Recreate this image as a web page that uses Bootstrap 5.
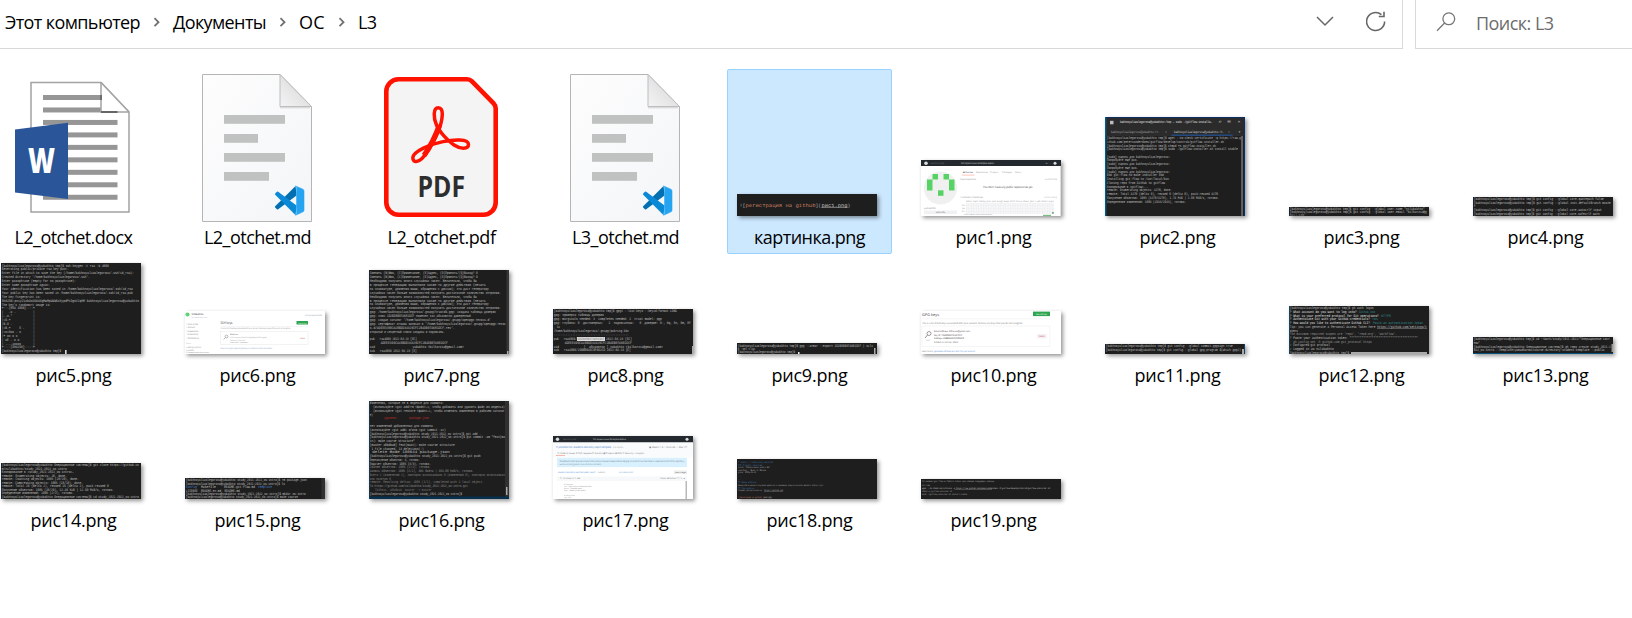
<!DOCTYPE html>
<html lang="ru">
<head>
<meta charset="utf-8">
<meta name="viewport" content="width=device-width, initial-scale=1">
<title>L3</title>
<link href="https://cdn.jsdelivr.net/npm/bootstrap@5.3.0/dist/css/bootstrap.min.css" rel="stylesheet">
<style>
body{font-family:"Open Sans","Noto Sans",sans-serif;font-size:18px;color:#000;background:#fff;height:618px;overflow:hidden}
.topbar{height:49px;gap:12px}
.address{width:1403px;border-right:1px solid #d9d9d9;border-bottom:1px solid #d9d9d9;padding:0 16px 4px 5px}
.finder{border-left:1px solid #d9d9d9;border-bottom:1px solid #d9d9d9;color:#6d6d6d;padding:0 0 2px 20px}
.crumb{display:block;white-space:nowrap;line-height:26px}
.files{display:grid;grid-template-columns:repeat(9,165px);grid-template-rows:185px 138px 145px;column-gap:19px;margin:20px 0 0 -9px}
.tile{padding-bottom:37px;border:1px solid transparent;position:relative}
.tile.chosen{background:#cce8ff;border-color:#99d1ff;border-radius:2px}
.tile svg{display:block;overflow:visible;flex:none}
.sheet{margin-left:-1px}
.shot{margin-left:9px;box-shadow:2px 2px 4px rgba(0,0,0,.42)}
.shot text{text-rendering:geometricPrecision}
.caption{position:absolute;left:-7px;right:-7px;bottom:4px;text-align:center;line-height:24px;white-space:nowrap}
.mono{font-family:"Liberation Mono",monospace;white-space:pre}
</style>
</head>
<body>
<header class="topbar d-flex">
  <nav class="address d-flex align-items-center" aria-label="Путь">
    <span class="crumb" data-w="133">Этот компьютер</span>
    <svg width="33" height="12" class="flex-shrink-0"><path d="M14.5 2.2l4 4-4 4" fill="none" stroke="#707070" stroke-width="1.8"/></svg>
    <span class="crumb" data-w="91">Документы</span>
    <svg width="33" height="12" class="flex-shrink-0"><path d="M14.5 2.2l4 4-4 4" fill="none" stroke="#707070" stroke-width="1.8"/></svg>
    <span class="crumb" data-w="24">ОС</span>
    <svg width="33" height="12" class="flex-shrink-0"><path d="M14.5 2.2l4 4-4 4" fill="none" stroke="#707070" stroke-width="1.8"/></svg>
    <span class="crumb" data-w="16.5">L3</span>
    <svg class="ms-auto" width="18" height="12" viewBox="0 0 18 12" style="margin-right:32px"><path d="M1 1l8 8 8-8" fill="none" stroke="#666" stroke-width="1.5"/></svg>
    <svg width="20" height="22" viewBox="0 0 20 22"><path d="M15.400 3.600A9 9 0 1 0 18.600 10.500M18 .700V5.500h-5.200" fill="none" stroke="#666" stroke-width="1.600"/></svg>
  </nav>
  <div class="finder d-flex align-items-center flex-grow-1">
    <svg width="20" height="20" viewBox="0 0 20 20" style="margin-bottom:2px"><circle cx="12.8" cy="6.800" r="5.900" fill="none" stroke="#777" stroke-width="1.300"/><path d="M8.600 11L1 18.700" stroke="#777" stroke-width="1.300"/></svg>
    <span class="crumb" data-w="75.500" style="margin-left:20px">Поиск: L3</span>
  </div>
</header>
<main class="files" id="files"></main>

<svg width="0" height="0" class="d-block">
  <defs>
    <linearGradient id="paper" x1="0" y1="0" x2="1" y2="1"><stop offset="0" stop-color="#fdfdfd"/><stop offset="1" stop-color="#f3f5f7"/></linearGradient>
    <linearGradient id="fold" x1="0" y1="1" x2=".7" y2=".3"><stop offset="0" stop-color="#f4f4f4"/><stop offset="1" stop-color="#dcdcdc"/></linearGradient>
  </defs>
</svg>
<script src="https://cdn.jsdelivr.net/npm/bootstrap@5.3.0/dist/js/bootstrap.bundle.min.js"></script>
<script>
const esc = s => s.replace(/&/g,'&amp;').replace(/</g,'&lt;');
// One line of thumbnail text squeezed to width w
const line = (x,y,w,s,c='#c4c4c4',fs=3.8,cls='mono') =>
  `<text class="${cls}" x="${x}" y="${y}" font-size="${fs}" fill="${c}" textLength="${Math.min(w,138-x)}" lengthAdjust="spacingAndGlyphs">${esc(s)}</text>`;
const rect = (x,y,w,h,c,e='') => `<rect x="${x}" y="${y}" width="${w}" height="${h}" fill="${c}" ${e}/>`;
const shot = (h,body,bg='#1e1e1e') => `<svg class="shot" width="140" height="${h}" viewBox="0 0 140 ${h}" style="overflow:hidden">${rect(0,0,140,h,bg)}${body}</svg>`;
// Console: rows are [text, width, colour, x], spaced by the pitch
const term = (h,y0,p,rows,extra='') => shot(h, rows.map((r,i)=> r ? line(r[3]??.8, (y0+1.2+i*p).toFixed(1), r[1], r[0], r[2]) : '').join('')+extra);
const P='[bakhnoyuliaslegorova@yubakhto tmp]$ ';

const word = `<svg class="sheet" width="165" height="147" viewBox="-9 69 165 147">
<path d="M31 82.5h70l28 29.5v100H31z" fill="#fff" stroke="#a3a3a3" stroke-width="1.5"/>
${[0,1,2,3,4,5,6,7,8].map(i=>rect(43,95+i*12.47,i?74.5:58,5,'#969696')).join('')}
<path d="M101 83v29h28z" fill="#fff"/><path d="M101 82.5v29.5h28" fill="none" stroke="#a3a3a3" stroke-width="1.5"/><path d="M101 95v5M101 112h16.5" stroke="#666" stroke-width="1.8"/><path d="M101 82.5l28 29.5" stroke="#a3a3a3" stroke-width="1.5"/>
<path d="M15 129.5l53-6.8V199l-53-6.5z" fill="#2a5699"/>
<text x="28" y="173.4" font-family="Open Sans" font-weight="800" font-size="34.5" fill="#fff" textLength="27" lengthAdjust="spacingAndGlyphs">W</text></svg>`;
const md = `<svg class="sheet" width="165" height="147" viewBox="175 69 165 147">
<path d="M202.5 74.5h77.5l31.5 32V221.500h-109z" fill="url(#paper)" stroke="#b5b5b5"/>
<path d="M280 107.800h30" stroke="#cfcfcf"/><path d="M280 74.500v32h31.500z" fill="url(#fold)" stroke="#bdbdbd"/>
${[[115,61],[134,34],[153,61],[172,45]].map(a=>rect(224,a[0],a[1],8.8,'#c0c2c1')).join('')}
<path d="M295.600 186l.9 9.400-18.300 13.900q-.7.500-1.300 0l-1.700-1.700q-.6-.7 0-1.400z" fill="#0070b3"/>
<path d="M295.600 215.200l.9-9.600-18.300-13.800q-.7-.5-1.300 0l-1.700 1.600q-.6.700 0 1.400z" fill="#0a8ad6"/>
<path d="M295.600 186l6.900 3.100q1.500.6 1.500 1.900v19.200q0 1.300-1.500 1.900l-6.900 3.100q1-.3 1-1.700v-25.800q0-1.400-1-1.700z" fill="#26a4f2" stroke="#26a4f2" stroke-width=".6"/></svg>`;
const pdf = `<svg class="sheet" width="165" height="147" viewBox="359 69 165 147">
<path d="M398.500 79.300h68.500q3 0 5 2l21.600 22q2.100 2.200 2.100 5.200v94.100a12.200 12.200 0 0 1-12.200 12.200h-85a12.200 12.200 0 0 1-12.200-12.200V91.500a12.200 12.200 0 0 1 12.200-12.200z" fill="#f4f4f4" stroke="#ff1200" stroke-width="4.600"/>
<path d="M438.200 107.700C433 107.700 433.400 118 436.500 125 439.500 132 448 141 454 145 460 149 468.500 149.500 468.500 144.500 468.500 138.500 453 139.700 443 141.600 431 144 413 151 412.800 157.800 412.800 163.500 419.500 162.500 425 155 433 143.500 441.800 127 442.300 114.500 442.400 110 441 107.700 438.200 107.700z" fill="none" stroke="#ff1200" stroke-width="3.500" stroke-linejoin="round"/>
<path d="M424 155.500Q433 143 439.500 125" fill="none" stroke="#ff1200" stroke-width="5.200"/>
<text x="417.500" y="196.800" font-family="Open Sans" font-weight="700" font-size="29" fill="#2d2d2d" textLength="47.500" lengthAdjust="spacingAndGlyphs">PDF</text></svg>`;

const sans='fw-normal';
const s1 = shot(56,
  rect(0,0,140,6,'#24292f')+`<circle cx="5" cy="3.200" r="1.800" fill="#ddd"/><circle cx="134" cy="3.200" r="1.500" fill="#ddd"/>`+
  line(10,4.300,13,'Search or jump','#777',2.600,sans)+line(40,4.300,33,'Pull requests Issues Marketplace Explore','#ddd',2.600,sans)+line(124,4.300,6,'+ ·','#aaa',2.600,sans)+
  `<circle cx="19.500" cy="28" r="16.600" fill="#f0f0f0"/>`+
  rect(11.5,14,5.500,5.500,'#56d364')+rect(22.5,14,5.500,5.500,'#56d364')+rect(6,19.500,5.500,11,'#56d364')+rect(28,19.500,5.500,11,'#56d364')+rect(17,30.300,5.500,5.500,'#56d364')+
  line(42,13.300,10,'▣ Overview','#444',2.500,sans)+rect(41,14.800,12.500,.5,'#fd8c73')+line(55,13.300,12,'Repositories','#999',2.500,sans)+line(69,13.300,8,'Projects','#999',2.500,sans)+line(81,13.300,10,'Packages','#999',2.500,sans)+line(94,13.300,6,'Stars','#999',2.500,sans)+
  line(39,20,16,'Popular repositories','#888',2.400,sans)+line(124,20,12,'Customize','#aaa',2.300,sans)+
  line(62,28,50,"You don't have any public repositories yet.",'#444',3,sans)+
  line(39,38,23,'1 contribution in the last year','#888',2.400,sans)+line(123,38,13,'Contribution settings','#aaa',2.200,sans)+
  line(45,42.200,88,'Mar   Apr   May   Jun   Jul   Aug   Sep   Oct   Nov   Dec   Jan   Feb   Mar   Apr','#999',2.200,sans)+
  rect(45,43.200,88,10.500,'#ecedef')+Array.from({length:52},(_,i)=>rect(46.200+i*1.690,43.200,.35,10.500,'#fff')).join('')+[1,2,3,4,5,6].map(i=>rect(45,43.200+i*1.500,88,.3,'#fff')).join('')+
  line(41,46.200,3,'Mon','#999',2,sans)+line(41,49.300,3,'Wed','#999',2,sans)+line(41,52.400,3,'Fri','#999',2,sans)+rect(131,52,1.800,1.800,'#7aa884')+
  line(3,48.500,12,'yubakhto','#888',2.300,sans)+rect(3,50.500,33,3.500,'#f0f1f2')+line(15,53.200,9,'Edit profile','#555',2.200,sans)+line(43,55.400,28,'Learn how we count contributions','#999',1.800,sans)+rect(122,54.800,8,1.200,'#79bd87')+rect(139,6,1,50,'#ddd'),'#fff');
const s0 = shot(22,line(2.500,12.500,6,'![','#bbb',5)+line(8.500,12.500,70,'регистрация на github','#c98063',5)+line(78.500,12.500,5.500,'](','#bbb',5)+line(84.500,12.500,26,'рис1.png','#c5c5c5',5)+line(110.500,12.500,2.800,')','#bbb',5)+rect(84.500,13.100,26,.6,'#aaa'));
const r2=[[P+'wget --no-check-certificate -q https://raw.g',134],['ithub.com/petervanderdoes/gitflow/develop/contrib/gitflow-installer.sh',117],[P+'chmod +x gitflow-installer.sh',109],[P+'sudo ./gitflow-installer.sh install stable',131],null,['[sudo] пароль для bakhnoyuliaslegorova:',63],['Попробуйте ещё раз.',31],['[sudo] пароль для bakhnoyuliaslegorova:',63],['Попробуйте ещё раз.',31],['[sudo] пароль для bakhnoyuliaslegorova:',63],['### git-flow no-make installer ###',57],['Installing git-flow to /usr/local/bin',62],['Cloning repo from GitHub to gitflow',58],['Клонирование в «gitflow»...',41],['remote: Enumerating objects: 4270, done.',65],['remote: Total 4270 (delta 0), reused 0 (delta 0), pack-reused 4270',111],['Получение объектов: 100% (4270/4270), 1.74 MiB | 2.98 MiB/s, готово.',112],['Определение изменений: 100% (2533/2533), готово.',79]].map(r=>r&&[r[0],r[1],'#c4c4c4',2]);
const s2 = term(99,20.800,3.740,r2,rect(0,0,140,19,'#2b2b2b')+rect(0,0,140,.8,'#08326e')+rect(0,0,1.400,99,'#075a85')+rect(138.800,0,1.200,99,'#0a2f6d')+rect(66.500,17.500,61,1.500,'#234a80')+rect(136.300,19,1.500,80,'#777')+
  rect(5,3.800,3.500,3.500,'#bbb')+line(15,6.300,92,'bakhnoyuliaslegorova@yubakhto:/tmp — sudo ./gitflow-installe…','#eee',3.600)+line(113,6.300,4,'⌕','#ccc',4)+line(122,6.300,4,'≡','#ccc',4)+line(132.500,6.300,3,'×','#ddd',4)+
  line(6,15.500,50,'bakhnoyuliaslegorova@yubakhto:/t… ','#aaa',3.300)+line(60,15.500,2,'×','#aaa',3.300)+line(69,15.500,50,'bakhnoyuliaslegorova@yubakhto:/t…','#ddd',3.300)+line(123,15.500,2,'×','#aaa',3.300)+line(133,15.500,3,'▾','#ccc',3.300));
const s3 = term(9,1.700,3,[[P+'git config --global user.name "nilibakhto"',135],[P+'git config --global user.email "bilharzia@g',137],['mail.com"',16,'#888']]);
const s4 = term(19,2,3.600,[[P+'git config --global core.quotepath false',130],[P+'git config --global init.defaultBranch maste',137],['r',2],[P+'git config --global core.autocrlf input',128],[P+'git config --global core.safecrlf warn',126]]);
const s5 = term(91,2.300,3.900,[[P+'ssh-keygen -t rsa -b 4096',107],['Generating public/private rsa key pair.',67],['Enter file in which to save the key (/home/bakhnoyuliaslegorova/.ssh/id_rsa):',132],["Created directory '/home/bakhnoyuliaslegorova/.ssh'.",88],['Enter passphrase (empty for no passphrase):',74],['Enter same passphrase again:',48],['Your identification has been saved in /home/bakhnoyuliaslegorova/.ssh/id_rsa',131],['Your public key has been saved in /home/bakhnoyuliaslegorova/.ssh/id_rsa.pub',131],['The key fingerprint is:',39],['SHA256:pniyZizbUskOUAXgMwMpUWWKzXypdPtDgsVJqHM bakhnoyuliaslegorova@yubakhto',138],["The key's randomart image is:",49],['+---[RSA 4096]----+',33],['|   .o .          |',33],['|..o.*            |',33],['|=O.+             |',33],['|B.O .            |',33],['|=B.+     S .     |',33],['|=o=Ooo . o       |',33],['|+ oo o o         |',33],['| oE . o o        |',33],['| ....ioooo       |',33],['+----[SHA256]-----+',33],[P,61]],rect(64,87,1.600,4,'#ddd'));
const s6 = shot(43,
 `<circle cx="2.500" cy="3.500" r="2.100" fill="#5fd37a"/>`+line(6.500,4,12,'NiliBakhto','#333',2.600,sans)+line(6.500,6.900,16,'Your personal account','#aaa',2,sans)+line(120,5,17,'Go to your personal profile','#789',2.200,sans)+
 ['Public profile','Account','Appearance','Accessibility','Notifications'].map((t,i)=>line(1,13.500+i*3.600,[12,9,12,12,13][i],'○ '+t,'#888',2.400,sans)).join('')+
 line(1,33.200,5,'Access','#aaa',2,sans)+line(1,36.500,15,'▭ Billing and plans','#888',2.200,sans)+line(1,39.700,8,'✉ Emails','#888',2.200,sans)+line(1,42.400,23,'⊙ Password and authentication','#777',1.900,sans)+
 line(35.500,13.200,12,'SSH keys','#333',3.500,sans)+rect(35.500,15.200,87,.3,'#ddd')+rect(111.500,10,11.500,3.500,'#2da44e')+line(113,12.500,8.500,'New SSH key','#fff',1.900,sans)+
 line(35.500,18.300,70,'This is a list of SSH keys associated with your account. Remove any keys that you do not recognize.','#888',2.200,sans)+
 `<rect x="35.500" y="20.700" width="87.500" height="13" fill="#fff" stroke="#e2e2e2" stroke-width=".4"/><circle cx="41.500" cy="25.500" r="1.400" fill="none" stroke="#888" stroke-width=".6"/><path d="M40.500 26.500l-1.800 2" stroke="#888" stroke-width=".6"/>`+
 line(45,24.300,8,'Bakhto','#555',2,sans)+line(45,26.900,37,'SHA256:pniyZizbUskOUAXgMwMpUWWKzXypdPt','#999',1.900,sans)+line(45,29.500,15,'Added on 22 Apr 2022','#999',1.900,sans)+line(45,32,18,'Never used — Read/write','#777',1.900,sans)+line(115,27.800,5,'Delete','#d46a76',2.200,sans)+
 line(35.500,37.500,52,'Check out our guide to generating SSH keys or troubleshoot common SSH problems.','#7b9bc4',2.200,sans),'#fff');
const s7 = term(84,3.200,3.870,[['Сменить (N)Имя, (C)Примечание, (E)Адрес, (O)Принять/(Q)Выход? O',108],['Сменить (N)Имя, (C)Примечание, (E)Адрес, (O)Принять/(Q)Выход? O',108],['Необходимо получить много случайных чисел. Желательно, чтобы Вы',107],['в процессе генерации выполняли какие-то другие действия (печать',116],['на клавиатуре, движения мыши, обращения к дискам); это даст генератору',119],['случайных чисел больше возможностей получить достаточное количество энтропии.',131],['Необходимо получить много случайных чисел. Желательно, чтобы Вы',107],['в процессе генерации выполняли какие-то другие действия (печать',116],['на клавиатуре, движения мыши, обращения к дискам); это даст генератору',119],['случайных чисел больше возможностей получить достаточное количество энтропии.',131],['gpg: /home/bakhnoyuliaslegorova/.gnupg/trustdb.gpg: создана таблица доверия',126],['gpg: ключ 1D2BD8B07A681DCF помечен как абсолютно доверенный',101],["gpg: создан каталог '/home/bakhnoyuliaslegorova/.gnupg/openpgp-revocs.d'",121],["gpg: сертификат отзыва записан в '/home/bakhnoyuliaslegorova/.gnupg/openpgp-revoc",136],["s.d/ADEEE390CA48BDD34326CFC2B4DB07A681DCF.rev'.",85],['открытый и секретный ключи созданы и подписаны.',75],null,['pub   rsa4096 2022-04-23 [SC]',47],['      ADEEE390CA48BDD34326CFC2B4DB07A681DCF',78],['uid                      yubakhto <bilharzia@gmail.com>',94],['sub   rsa4096 2022-04-23 [E]',47]],rect(137.500,0,2.500,84,'#363636')+rect(138,81,1.500,3,'#aaa'));
const s8 = term(45,2.200,3.900,[[P+'gpg2 --list-keys --keyid-format LONG',123],['gpg: проверка таблицы доверия',50],['gpg: marginals needed: 3  completes needed: 1  trust model: pgp',108],['gpg: глубина: 0  достоверных:   1  подписанных:   0  доверие: 0-, 0q, 0n, 0m, 0f',137],[', 1u',6],['/home/bakhnoyuliaslegorova/.gnupg/pubring.kbx',75],['---------------------------------------------',75],['pub   rsa4096/',23],['      ADEEE390CA48BDD34326CFC2B4DB07A681DCF',78],['uid              [  абсолютно ] yubakhto <bilharzia@gmail.com>',109],['sub   rsa4096/25BB86A5C9F0D2CD 2022-04-23 [E]',77]],rect(24,28,28,4,'#ddd')+line(24.500,31,27,'1D2BD8B07A681DCF','#777',3.500)+line(53,30.700,26,'2022-04-23 [SC]')+rect(139,37,1,8,'#aaa'));
const s9 = term(11,2.600,3.100,[[P+'gpg --armor --export 1D2BD8B07A681DCF | xcli',135],['p -sel clip',17],[P,59]],rect(61,9,1.500,2,'#eee')+rect(137,5,1.500,6,'#aaa'));
const s10 = shot(43,line(1,4.800,17,'GPG keys','#333',3.700,sans)+rect(112,.6,17,4.500,'#2da44e')+line(115,3.700,11,'New GPG key','#fff',2.200,sans)+rect(1,7.800,128,.3,'#ddd')+
 line(1,13,101,'This is a list of GPG keys associated with your account. Remove any keys that you do not recognize.','#777',2.600,sans)+
 `<rect x="1" y="15" width="128" height="20.500" fill="#fff" stroke="#e5e5e5" stroke-width=".4"/><circle cx="8" cy="22.500" r="2" fill="none" stroke="#777" stroke-width=".7"/><path d="M6.500 24L4 27" stroke="#777" stroke-width=".8"/>`+line(5,30,4,'GPG','#aaa',2,sans)+
 line(13,20.800,36,'Email address: bilharzia@gmail.com','#444',2.500,sans)+line(13,24.500,28,'Key ID: 1D2BD8B07A681DCF','#555',2.500,sans)+line(13,28.200,30,'Subkeys: 25BB86A5C9F0D2CD','#444',2.500,sans)+line(13,32,24,'Added on 23 Apr 2022','#777',2.500,sans)+rect(116,23,9.500,4.500,'#f5f0f1')+line(118,26,5.500,'Delete','#d0606c',2.300,sans)+
 line(1,41.300,11,'Learn how to','#777',2.400,sans)+line(13,41.300,41,'generate a GPG key and add it to your account','#5c91d6',2.400,sans),'#fff');
const s11 = term(10,2,3.500,[[P+'git config --global commit.gpgsign true',127],[P+'git config --global gpg.program $(which gpg2)',135]],rect(137,5,2,5,'#aaa')+rect(139.300,0,.7,10,'#154d88'));
const s12 = term(48,2.100,3.700,[[P+'gh auth login',84],['? What account do you want to log into?',67,'#eee'],['? What is your preferred protocol for Git operations?',89,'#eee'],['? Authenticate Git with your GitHub credentials?',80,'#eee'],['? How would you like to authenticate GitHub CLI?',80,'#eee'],['Tip: you can generate a Personal Access Token here https://github.com/settings/t',137],['okens',8],["The minimum required scopes are 'repo', 'read:org', 'workflow'.",107,'#999'],['? Paste your authentication token: ****************************************',128,'#ccc'],['- gh config set -h github.com git_protocol https',82,'#999'],['✓ Configured git protocol',40],['✓ Logged in as nilibakhto',44,'#ccc'],[P,61]],line(70,7,16,'GitHub.com','#2a9090',3.600)+line(92,10.700,10,'HTTPS','#2a9090',3.600)+line(83,14.400,6,'Yes','#2a9090',3.600)+line(84,18.100,50,'Paste an authentication token','#2a9090',3.600)+rect(88,22.600,50,.4,'#aaa')+rect(62,46,76,2,'#aaa')+rect(0,0,.7,48,'#165274'));
const s13 = term(17,2,3.750,[[P+'cd ~/work/study/2021-2022/"Операционные сист',136],['емы"',6],['[bakhnoyuliaslegorova@yubakhto Операционные системы]$ gh repo create study_2021-2',137],['022_os-intro --template=yamadharma/course-directory-student-template --public',131]],rect(0,16,140,1,'#07527c')+rect(138.500,7,1.500,8,'#999'));
const s14 = term(36,2,3.520,[['[bakhnoyuliaslegorova@yubakhto Операционные системы]$ git clone https://github.co',137],['m/nilibakhto/study_2021-2022_os-intro',65],['Клонирование в «study_2021-2022_os-intro»…',72],['remote: Enumerating objects: 20, done.',65],['remote: Counting objects: 100% (20/20), done.',77],['remote: Compressing objects: 100% (18/18), done.',81],['remote: Total 20 (delta 2), reused 15 (delta 2), pack-reused 0',107],['Получение объектов: 100% (20/20), 12.49 KiB | 12.50 MiB/s, готово.',112],['Определение изменений: 100% (2/2), готово.',72],['[bakhnoyuliaslegorova@yubakhto Операционные системы]$ cd study_2021-2022_os-intro',139]]);
const Q='[bakhnoyuliaslegorova@yubakhto study_2021-2022_os-intro]$ ';
const s15 = term(21,2.100,3.400,[[Q+'rm package.json',121],[Q+'ls',99],['config',11,'#4a86d0'],['LICENSE  README.en.md  README.md',54],[Q+'mkdir os-intro',120],[Q+'make course',112]],line(16,10.100,15,'Makefile')+line(39,10.100,31,'README.git-flow.md')+line(73,10.100,14,'template','#4a86d0')+rect(136.500,0,3.500,21,'#303030'));
const s16 = term(98,2.200,3.760,[['Изменения, которые не в индексе для коммита:',74],['  (используйте «git add/rm <файл>…», чтобы добавить или удалить файл из индекса)',135],['  (используйте «git restore <файл>…», чтобы отменить изменения в рабочем каталог',135],['е)',3],['удалено:       package.json',45,'#c03030',15],null,['нет изменений добавленных для коммита',63],['(используйте «git add» и/или «git commit -a»)',76],[Q+'git add .',111],[Q+'git commit -am "feat(ma',135],['in): make course structure"',45],['[master a0bdbad] feat(main): make course structure',85],[' 1 file changed, 14 deletions(-)',54],[' delete mode 100644 package.json',80],[Q+'git push',111],['Перечисление объектов: 3, готово.',50],['Подсчет объектов: 100% (3/3), готово.',61],['Сжатие объектов: 100% (2/2), готово.',61,'#999'],['Запись объектов: 100% (2/2), 304 байта | 304.00 КиБ/с, готово.',104,'#999'],['Всего 2 (изменений 1), повторно использовано 0 (изменений 0), повторно использован',135,'#888'],['ано пакетов 0',21,'#888'],['remote: Resolving deltas: 100% (1/1), completed with 1 local object.',114,'#888'],['To https://github.com/nilibakhto/study_2021-2022_os-intro.git',98,'#999'],['   7b35eac..a0bdbad  master -> master',62,'#777'],[Q,94]],rect(136,0,4,98,'#303030')+rect(137,86,1.500,8,'#aaa')+rect(0,95.500,140,2.500,'#06304d')+rect(0,0,.5,98,'#17486d'));
const s17 = shot(63,rect(0,0,140,6.500,'#24292f')+`<circle cx="4.500" cy="3.300" r="1.700" fill="#ddd"/><circle cx="134" cy="3.300" r="1.500" fill="#ddd"/>`+line(10,4.300,13,'Search or jump','#777',2.500,sans)+line(40,4.300,33,'Pull requests Issues Marketplace Explore','#ddd',2.500,sans)+rect(0,6.500,140,15,'#fafbfc')+
 line(3,11.500,55,'⊓ yamadharma / academic-laboratory-report-template','#3b78c4',2.800,sans)+line(60,11.500,10,'Public template','#999',2.200,sans)+line(96,11.500,38,'◉ Watch 1 ▾   ⑂ Fork 35   ☆ Star 47','#777',2.400,sans)+
 line(4,17.500,87,'<> Code   ⊙ Issues   ⇅ Pull requests   ▷ Actions   ▦ Projects   ▤ Wiki   ⛨ Security   ⌁ Insights','#777',2.500,sans)+rect(3,19,9,.6,'#fd8c73')+
 rect(4,21.800,130,9.300,'#d9f1fe')+line(6.500,26,125,'The default branch requires a linear history and pull request reviews before merging, so commits must be made in a separate branch of this repository.','#678',2.300,sans)+line(6.500,29,42,'See the contributing guide for more information and details.','#789',2.200,sans)+
 line(5,36.500,38,'academic-laboratory-report-template / report /','#5793d6',2.400,sans)+line(45,36.500,7,'README.md','#888',2.200,sans)+line(66,36.500,14,'Go to latest commit','#5793d6',2.200,sans)+rect(121,34.500,13,3.500,'#eee')+line(122,37,11,'Latest changes','#444',2,sans)+
 rect(4,40.500,130,4.500,'#f6f8fa')+line(7,43.300,20,'≡ 72 lines   2.1 KB','#888',2.200,sans)+line(107,43.300,25,'Raw   Blame   ▢   ✎   ▾','#888',2.200,sans)+
 ['## Front matter','title: "Шаблон отчёта по лабораторной работе"','subtitle: "Простейший вариант"','author: "Дмитрий Сергеевич Кулябов"','','## Generic otions','lang: ru-RU'].map((t,i)=>t?line(11,49+i*2.150,t.length*.62,t,'#777',1.800):'').join('')+rect(132.500,45,1.500,18,'#b9b9b9'),'#fff');
const tiny = rows => rows.map(r=>line(1,r[0],r[1],r[2],r[3]||'#aaa',2.500)).join('');
const s18 = shot(40,tiny([[4,35,'# report / laboratory-work-03','#3d78b4'],[6.600,25,'## Front matter','#3d78b4'],[9.200,32,'title: "Лабораторная работа №3"'],[11.800,28,'author: Бахто Юлия'],[14.400,18,'group: НПМбд-02-21'],[17.500,3,'---','#3d78b4'],[21,3,'---','#3d78b4'],[24.200,18,'## Цель работы','#3d78b4'],[26.900,86,'Целью работы является изучение идеологии и применения средств контроля версий и работы с git.'],[29.500,16,'## Ход работы','#3d78b4'],[32.100,24,'Создаём учётную запись на'],[39,24,'![регистрация на github]','#c98063']])+line(27,32.100,19,'https://github.com','#bbb',2.500)+rect(27,32.600,19,.3,'#aaa')+line(26,39,9,'(рис1.png)','#ccc',2.500));
const s19 = shot(20,tiny([[2.500,73,'Установим git-flow в Fedora Linux при помощи следующих команд:'],[7,8,'cd /tmp'],[10,128,'wget --no-check-certificate -q https://raw.github.com/petervanderdoes -O gitflow/develop/contrib/gitflow-installer.sh','#ccc'],[12.800,30,'chmod +x gitflow-installer.sh'],[15.500,45,'sudo ./gitflow-installer.sh install stable']])+rect(34,10.600,37,.3,'#aaa'));

const files=[['L2_otchet.docx',word,116],['L2_otchet.md',md,105],['L2_otchet.pdf',pdf,106],['L3_otchet.md',md,105],['картинка.png',s0,109],
['рис1.png',s1],['рис2.png',s2],['рис3.png',s3],['рис4.png',s4],['рис5.png',s5],['рис6.png',s6],['рис7.png',s7],['рис8.png',s8],['рис9.png',s9],['рис10.png',s10],['рис11.png',s11],['рис12.png',s12],['рис13.png',s13],['рис14.png',s14],['рис15.png',s15],['рис16.png',s16],['рис17.png',s17],['рис18.png',s18],['рис19.png',s19]];
document.getElementById('files').innerHTML=files.map((f,i)=>`<figure class="tile m-0 d-flex flex-column justify-content-end${i==4?' chosen':''}">${f[1]}<figcaption class="caption"><span data-w="${f[2]||(f[0].length==8?74:84)}">${f[0]}</span></figcaption></figure>`).join('');
document.querySelectorAll('[data-w]').forEach(e=>{
  const w=e.getBoundingClientRect().width, n=e.textContent.length;
  if(!e.closest('figcaption')) e.style.width=(+e.dataset.w+2)+'px';
  const r=document.createRange(); r.selectNodeContents(e);
  const t=r.getBoundingClientRect().width;
  e.style.letterSpacing=((+e.dataset.w+2-t)/n).toFixed(3)+'px';
});
</script>
</body>
</html>
